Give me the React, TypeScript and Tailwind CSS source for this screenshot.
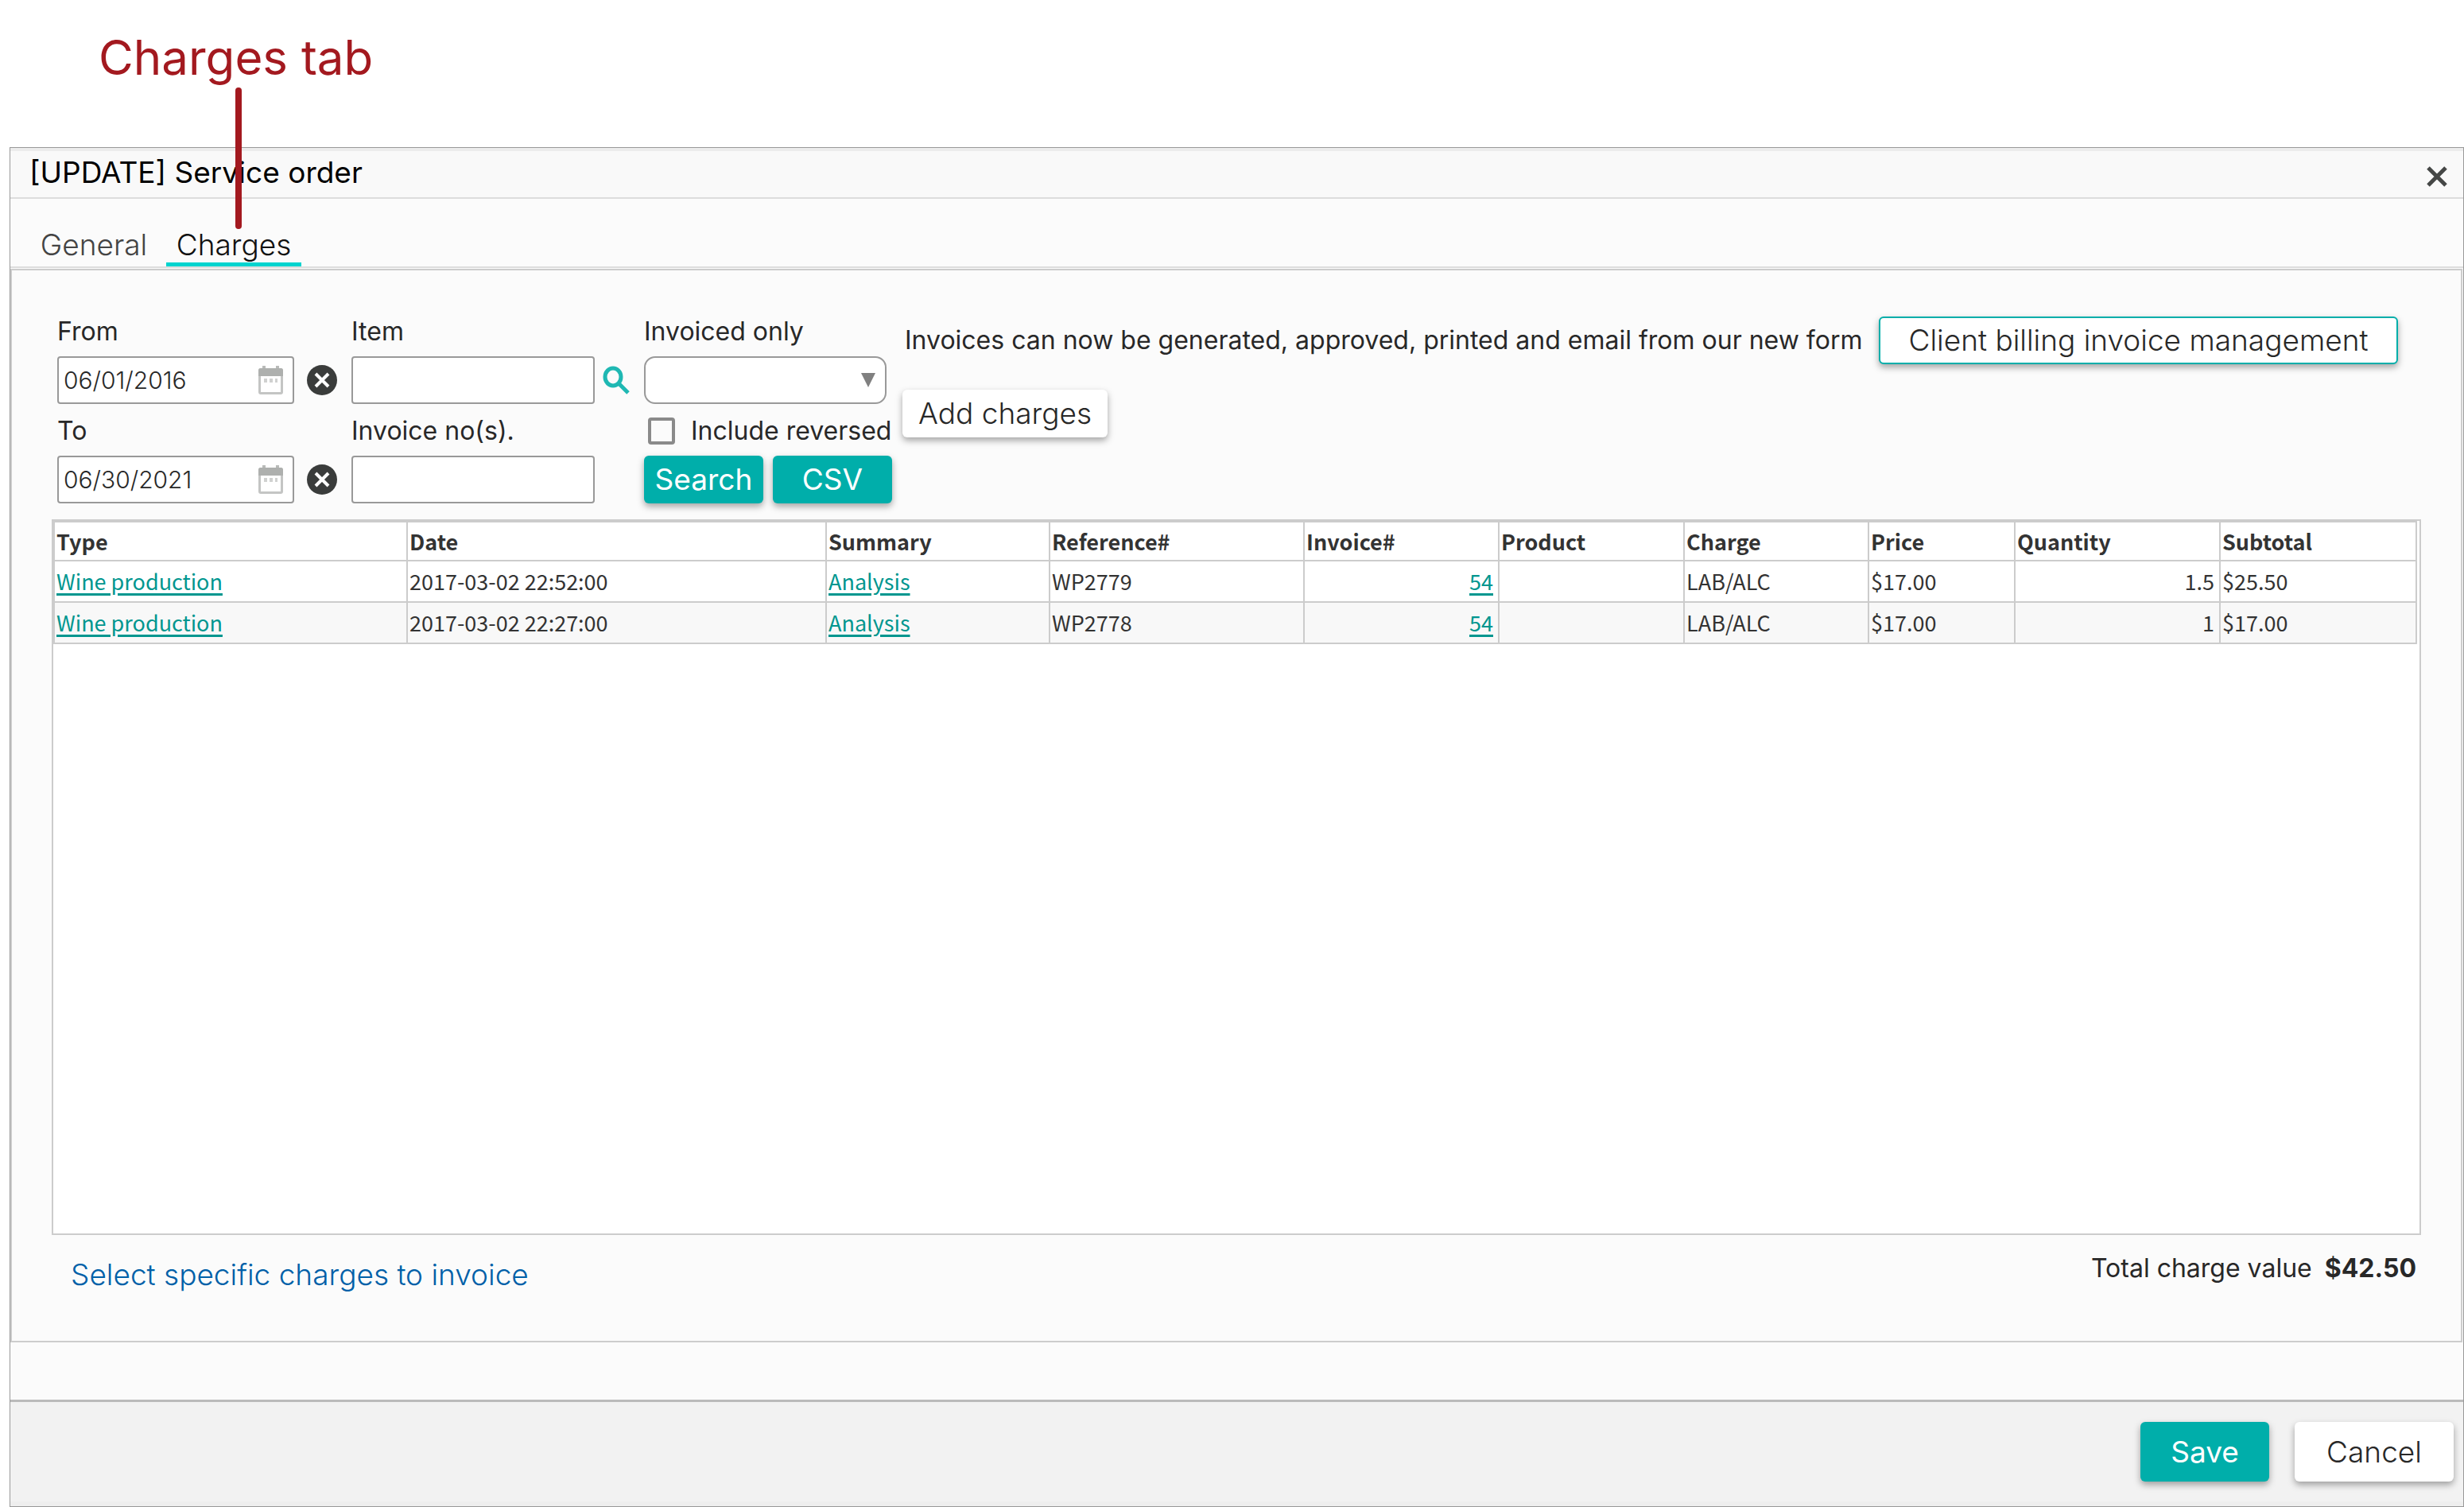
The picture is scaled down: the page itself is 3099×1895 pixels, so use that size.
import type { ButtonHTMLAttributes, ReactNode } from "react";

const fieldClass =
  "h-[60px] rounded border-2 border-[#999] bg-white px-1.5 text-[30px] font-light text-[#282828] outline-none";

const labelClass = "text-[32px] leading-9 text-[#282828]";

type Charge = {
  type: string;
  date: string;
  summary: string;
  reference: string;
  invoice: string;
  product: string;
  charge: string;
  price: string;
  quantity: string;
  subtotal: string;
};

const charges: Charge[] = [
  {
    type: "Wine production",
    date: "2017-03-02 22:52:00",
    summary: "Analysis",
    reference: "WP2779",
    invoice: "54",
    product: "",
    charge: "LAB/ALC",
    price: "$17.00",
    quantity: "1.5",
    subtotal: "$25.50",
  },
  {
    type: "Wine production",
    date: "2017-03-02 22:27:00",
    summary: "Analysis",
    reference: "WP2778",
    invoice: "54",
    product: "",
    charge: "LAB/ALC",
    price: "$17.00",
    quantity: "1",
    subtotal: "$17.00",
  },
];

const columns: { name: string; key: keyof Charge; width: string; link?: boolean; right?: boolean }[] = [
  { name: "Type", key: "type", width: "w-[444px]", link: true },
  { name: "Date", key: "date", width: "w-[527px]" },
  { name: "Summary", key: "summary", width: "w-[281px]", link: true },
  { name: "Reference#", key: "reference", width: "w-[320px]" },
  { name: "Invoice#", key: "invoice", width: "w-[245px]", link: true, right: true },
  { name: "Product", key: "product", width: "w-[233px]" },
  { name: "Charge", key: "charge", width: "w-[232px]" },
  { name: "Price", key: "price", width: "w-[184px]" },
  { name: "Quantity", key: "quantity", width: "w-[258px]", right: true },
  { name: "Subtotal", key: "subtotal", width: "w-[247px]" },
];

function CalendarIcon() {
  return (
    <svg viewBox="0 0 31 36" className="h-9 w-[31px]" aria-hidden="true">
      <path d="M5 0h4v4H5zM22 0h4v4h-4z" fill="#b9bbb9" />
      <path d="M3 3h25a3 3 0 0 1 3 3v27a3 3 0 0 1-3 3H3a3 3 0 0 1-3-3V6a3 3 0 0 1 3-3zM3 13v20h25V13z" fill="#c4c5c4" fillRule="evenodd" />
      <path d="M3 3h25a3 3 0 0 1 3 3v7H0V6a3 3 0 0 1 3-3z" fill="#aeb0ae" />
      <path d="M7 16h4v5H7zM14 16h4v5h-4zM21 16h3v5h-3z" fill="#d0d1d0" />
    </svg>
  );
}

function ClearIcon() {
  return (
    <svg viewBox="0 0 40 40" className="size-10" aria-hidden="true">
      <circle cx="20" cy="20" r="19" fill="#3a3c3b" />
      <path d="M12 12l16 16M28 12L12 28" stroke="#fff" strokeWidth="4" />
    </svg>
  );
}

function SearchIcon() {
  return (
    <svg viewBox="0 0 34 36" className="h-9 w-[34px]" fill="none" stroke="#1fb8b3" aria-hidden="true">
      <ellipse cx="13" cy="14" rx="10" ry="11" strokeWidth="5" />
      <path d="M20 22l12 12" strokeWidth="5" />
    </svg>
  );
}

function CloseIcon() {
  return (
    <svg viewBox="0 0 26 26" className="size-[26px]" fill="none" stroke="#454746" strokeWidth="5" aria-hidden="true">
      <path d="M2 2l22 22M24 2L2 24" />
    </svg>
  );
}

function DateField({ id, label, value }: { id: string; label: string; value: string }) {
  return (
    <div className="flex flex-col gap-[13px]">
      <label htmlFor={id} className={labelClass}>
        {label}
      </label>
      <div className="flex items-center gap-[15px]">
        <div className="relative flex">
          <input id={id} defaultValue={value} className={`${fieldClass} w-[298px]`} />
          <button type="button" aria-label={`Pick ${label} date`} className="absolute top-3 right-[14px]">
            <CalendarIcon />
          </button>
        </div>
        <button type="button" aria-label={`Clear ${label} date`}>
          <ClearIcon />
        </button>
      </div>
    </div>
  );
}

function Button({
  tone,
  className,
  children,
  ...rest
}: ButtonHTMLAttributes<HTMLButtonElement> & { tone: "teal" | "white" | "outline"; children: ReactNode }) {
  const tones = {
    teal: "bg-[#00aeaa] text-white",
    white: "bg-white font-light text-[#282828]",
    outline: "border-2 border-[#00aeaa] bg-white font-light text-[#282828]",
  };
  return (
    <button
      type="button"
      className={`rounded-md text-[37px] leading-10 whitespace-nowrap shadow-[0_4px_8px_rgba(0,0,0,0.35)] ${tones[tone]} ${className ?? ""}`}
      {...rest}
    >
      {children}
    </button>
  );
}

function ChargesTable() {
  return (
    <table className="w-full table-fixed border-collapse font-['Noto_Sans_CJK_SC','Noto_Sans',sans-serif] text-[27px] leading-8 text-[#333]">
      <thead>
        <tr className="h-[49px]">
          {columns.map((c) => (
            <th key={c.key} scope="col" className={`${c.width} border-2 border-[#ccc] px-0.5 text-left font-bold`}>
              {c.name}
            </th>
          ))}
        </tr>
      </thead>
      <tbody>
        {charges.map((row) => (
          <tr key={row.reference} className="h-[52px] even:bg-[#f8f8f8]">
            {columns.map((c) => (
              <td key={c.key} className={`border-2 border-[#ccc] ${c.right ? "px-1.5 text-right" : "px-0.5"}`}>
                {c.link ? (
                  <a href="#" className="text-[#00968f] underline decoration-[3px] underline-offset-4">
                    {row[c.key]}
                  </a>
                ) : (
                  row[c.key]
                )}
              </td>
            ))}
          </tr>
        ))}
      </tbody>
    </table>
  );
}

export default function App() {
  return (
    <div className="relative flex min-h-screen flex-col bg-white pl-3 font-[Inter,sans-serif]">
      <div className="flex h-[185px] shrink-0 pt-9 pl-28">
        <p className="text-[60px] leading-[72px] text-[#a3191f]">Charges tab</p>
      </div>
      <div className="absolute top-[110px] left-[296px] h-[178px] w-2 rounded-full bg-[#a3191f]" />

      <section className="flex grow flex-col border border-[#999] bg-[#fbfbfb]">
        <header className="flex h-16 items-center justify-between border-t-4 border-b-2 border-t-[#ececec] border-b-[#ddd] bg-[#f9f9f9] pr-5 pl-6">
          <h1 className="pb-1 text-[37px] leading-10 text-black">[UPDATE] Service order</h1>
          <button type="button" aria-label="Close" className="pt-1.5">
            <CloseIcon />
          </button>
        </header>

        <nav className="flex h-[87px] items-end gap-2.5 border-b-2 border-[#ddd] pl-6">
          <button type="button" className="h-[55px] w-[162px] text-[37px] leading-10 font-light text-[#444]">
            General
          </button>
          <button
            type="button"
            className="h-[55px] w-[170px] border-b-[5px] border-[#00d4cf] pt-[5px] text-[37px] leading-10 font-light text-[#111]"
          >
            Charges
          </button>
        </nav>

        <main className="mt-px mr-px flex grow flex-col border-2 border-[#ccc] pr-[50px] pl-[50px]">
          <form className="flex pt-[58px] pl-[7px]">
            <div className="flex flex-col gap-4 pt-px">
              <DateField id="from" label="From" value="06/01/2016" />
              <DateField id="to" label="To" value="06/30/2021" />
            </div>

            <div className="ml-[17px] flex flex-col gap-4 pt-px">
              <div className="flex flex-col gap-[13px]">
                <label htmlFor="item" className={labelClass}>
                  Item
                </label>
                <div className="flex items-center gap-2.5">
                  <input id="item" className={`${fieldClass} w-[306px]`} />
                  <button type="button" aria-label="Find item">
                    <SearchIcon />
                  </button>
                </div>
              </div>
              <div className="flex flex-col gap-[13px]">
                <label htmlFor="invoice-no" className={labelClass}>
                  Invoice no(s).
                </label>
                <input id="invoice-no" className={`${fieldClass} w-[306px]`} />
              </div>
            </div>

            <div className="ml-[18px] flex w-[312px] flex-col gap-4 pt-px">
              <div className="flex flex-col gap-[13px]">
                <label htmlFor="invoiced-only" className={labelClass}>
                  Invoiced only
                </label>
                <div className="relative flex w-[305px]">
                  <select
                    id="invoiced-only"
                    className="h-[60px] w-full appearance-none rounded-[14px] border-2 border-[#999] bg-white px-3 text-[30px]"
                  >
                    <option value="" />
                    <option>Yes</option>
                    <option>No</option>
                  </select>
                  <svg viewBox="0 0 18 18" className="pointer-events-none absolute top-[21px] right-[14px] size-[18px]" aria-hidden="true">
                    <path d="M0 0h18L9 18z" fill="#808080" />
                  </svg>
                </div>
              </div>
              <div className="flex flex-col gap-[13px]">
                <label className={`${labelClass} flex items-center gap-5 pl-[5px] whitespace-nowrap`}>
                  <input type="checkbox" className="size-[34px] shrink-0 appearance-none rounded border-4 border-[#8a8a8a]" />
                  Include reversed
                </label>
                <div className="flex gap-3">
                  <Button tone="teal" className="h-[60px] flex-1">
                    Search
                  </Button>
                  <Button tone="teal" className="h-[60px] flex-1">
                    CSV
                  </Button>
                </div>
              </div>
            </div>

            <div className="ml-[13px] flex flex-col items-start gap-8">
              <div className="flex items-center gap-5">
                <p className={`${labelClass} pl-[3px]`}>
                  Invoices can now be generated, approved, printed and email from our new form
                </p>
                <Button tone="outline" className="h-[60px] px-9">
                  Client billing invoice management
                </Button>
              </div>
              <Button tone="white" className="h-[60px] px-5">
                Add charges
              </Button>
            </div>
          </form>

          <div className="mt-5 grow border-2 border-[#ccc] bg-white pr-[3px]">
            <ChargesTable />
          </div>

          <div className="flex h-[133px] justify-between pt-6 pr-[6px] pl-6">
            <a href="#" className="pt-1.5 text-[37px] leading-10 font-light text-[#0060a8]">
              Select specific charges to invoice
            </a>
            <p className="flex gap-4 text-[32px] leading-9 text-[#282828]">
              Total charge value <strong className="font-bold">$42.50</strong>
            </p>
          </div>
        </main>

        <footer className="mt-[72px] flex h-[134px] items-start justify-end gap-8 border-t-[3px] border-b-[6px] border-t-[#bbb] border-b-[#eee] bg-[#f2f2f2] pt-[25px] pr-3">
          <Button tone="teal" className="h-[75px] w-[162px]">
            Save
          </Button>
          <Button tone="white" className="h-[75px] w-[200px]">
            Cancel
          </Button>
        </footer>
      </section>
    </div>
  );
}
